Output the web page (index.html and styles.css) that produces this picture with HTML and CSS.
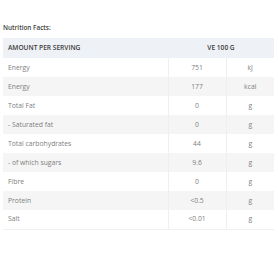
FILE: index.html
```html
<!DOCTYPE html>
<html>
<head>
<meta charset="utf-8">
<link rel="stylesheet" href="styles.css">
</head>
<body>
<div class="wrap">
  <h3 class="title">Nutrition Facts:</h3>
  <table class="nt">
    <colgroup><col class="c1"><col class="c2"><col class="c3"></colgroup>
    <thead>
      <tr><th class="lbl">AMOUNT PER SERVING</th><th colspan="2" class="per">VE 100 G</th></tr>
    </thead>
    <tbody>
      <tr><td>Energy</td><td class="v">751</td><td class="v">kJ</td></tr>
      <tr><td>Energy</td><td class="v">177</td><td class="v">kcal</td></tr>
      <tr><td>Total Fat</td><td class="v">0</td><td class="v">g</td></tr>
      <tr><td>- Saturated fat</td><td class="v">0</td><td class="v">g</td></tr>
      <tr><td>Total carbohydrates</td><td class="v">44</td><td class="v">g</td></tr>
      <tr><td>- of which sugars</td><td class="v">9.6</td><td class="v">g</td></tr>
      <tr><td>Fibre</td><td class="v">0</td><td class="v">g</td></tr>
      <tr><td>Protein</td><td class="v">&lt;0.5</td><td class="v">g</td></tr>
      <tr><td>Salt</td><td class="v">&lt;0.01</td><td class="v">g</td></tr>
    </tbody>
  </table>
</div>
</body>
</html>
```
FILE: styles.css
```css
html, body { margin: 0; padding: 0; background: #fff; }
body { font-family: "Open Sans", "Liberation Sans", sans-serif; color: #808080; }
.wrap { padding: 22px 4px 0 3px; }
.title { margin: 0 0 5px 0; font-size: 6.4px; line-height: 11px; font-weight: 600; color: #404040; }
.nt { width: 271px; border-collapse: collapse; table-layout: fixed; font-size: 6.8px; }
.c1 { width: 165px; } .c2 { width: 58px; } .c3 { width: 48px; }
.nt tr { height: 19px; }
.nt th, .nt td { padding: 0 5px; line-height: 10px; vertical-align: middle; }
.nt thead tr { height: 20px; background: #eef1f5; }
.nt th { font-weight: 600; color: #3a3a3a; font-size: 6.6px; }
.nt th.lbl { text-align: left; }
.nt th.per { text-align: center; }
.nt tbody td + td { border-left: 1px solid #efefef; }
.nt tbody tr:nth-child(even) { background: #f5f5f5; }
.nt tbody tr:last-child td { border-bottom: 1px solid #f0f0f0; }
.nt td.v { text-align: center; }
```
